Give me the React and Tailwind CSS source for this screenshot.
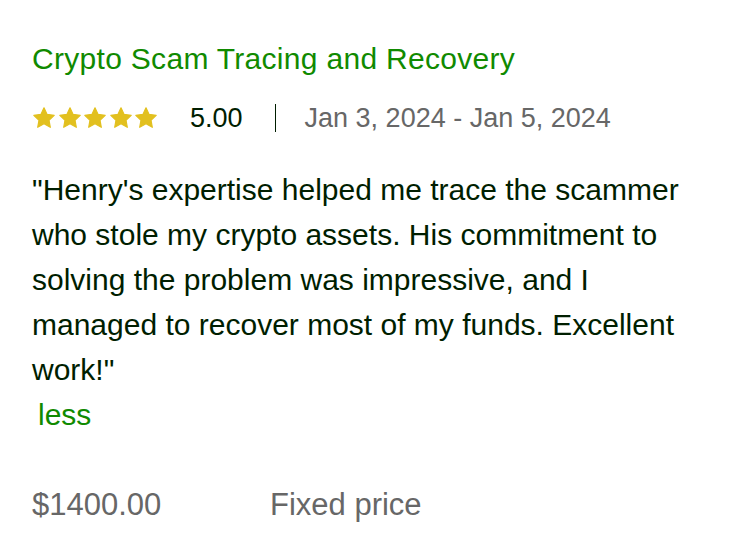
import React from 'react';

function Star() {
    return (
        <svg viewBox="0 0 24 24" className="w-[24px] h-[24px]" fill="#e2c01f">
            <path d="M12 1.8l3.1 6.6 7.1.9-5.2 4.9 1.3 7.1L12 17.8l-6.3 3.5 1.3-7.1-5.2-4.9 7.1-.9z" strokeLinejoin="round" stroke="#e2c01f" strokeWidth="1.2" />
        </svg>
    );
}

export default function App() {
    return (
        <div className="w-[744px] h-[560px] bg-white px-[32px] pt-[40px] font-['Liberation_Sans',Arial,sans-serif]">
            <h2 className="text-[30px] leading-[38px] tracking-[0.3px] text-[#108a00]">Crypto Scam Tracing and Recovery</h2>

            <div className="flex items-center mt-[26px] h-[28px]">
                <div className="flex gap-[1.5px]">
                    {[0, 1, 2, 3, 4].map(i => <Star key={i} />)}
                </div>
                <span className="ml-[32px] text-[27px] text-[#001e00]">5.00</span>
                <span className="ml-[32px] w-[1px] h-[28px] bg-[#001e00]" />
                <span className="ml-[29px] text-[27px] text-[#676767]">Jan 3, 2024 - Jan 5, 2024</span>
            </div>

            <p className="mt-[35px] text-[30px] leading-[45px] text-[#001e00] w-[670px]">
                "Henry's expertise helped me trace the scammer who stole my crypto assets. His commitment to solving the problem was impressive, and I managed to recover most of my funds. Excellent work!"
            </p>
            <button className="ml-[6px] text-[30px] leading-[45px] text-[#108a00]">less</button>

            <div className="flex mt-[45px] text-[31px] leading-[45px] text-[#676767]">
                <span className="w-[238px]">$1400.00</span>
                <span>Fixed price</span>
            </div>
        </div>
    );
}
